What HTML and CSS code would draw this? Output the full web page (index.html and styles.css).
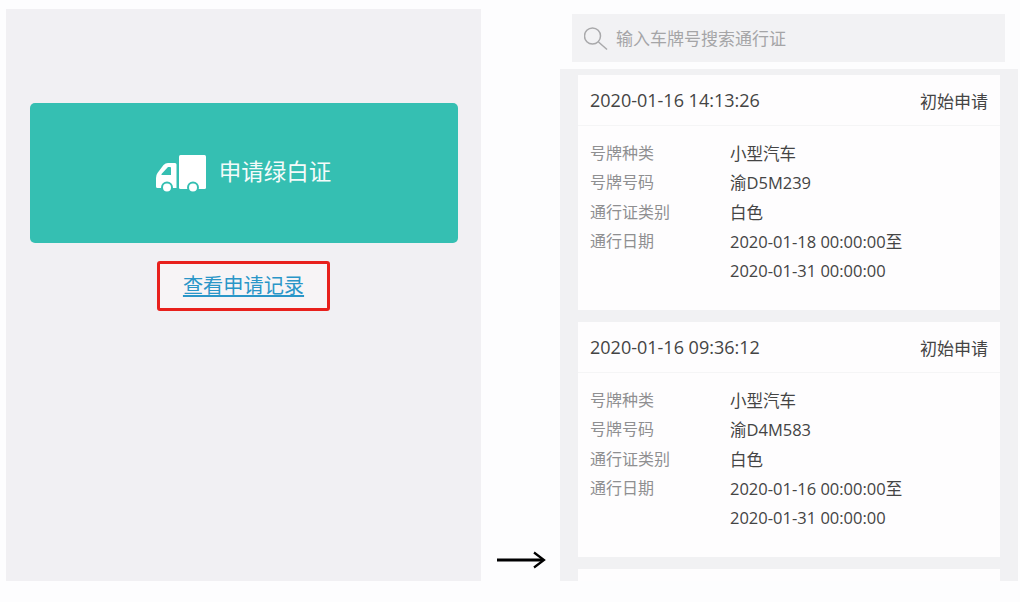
FILE: index.html
```html
<!DOCTYPE html>
<html lang="en">
<head>
    <meta charset="UTF-8">
    <meta name="viewport" content="width=device-width, initial-scale=1.0">
    <title>申请绿白证</title>
    <link rel="stylesheet" href="styles.css">
</head>
<body>
    <div class="page">
        <div class="apply-panel">
            <div class="apply-btn">
                <svg class="truck" width="50" height="38" viewBox="0 0 50 38">
                    <path fill="#fff" fill-rule="evenodd" d="M12 8h7q1.500 0 1.500 1.500v23.500h-19q-1.500 0-1.500-1.500v-8.500q0-3 1.500-5l6-8q2-2 4.500-2zM12 12h2q1 0 1 1v7h-9.500v-1z"/>
                    <path fill="#fff" d="M23 1.500q0-1.500 1.500-1.500h24q1.500 0 1.500 1.500v31q0 1.500-1.500 1.500h-24q-1.500 0-1.500-1.500z"/>
                    <circle cx="11" cy="32.500" r="5" fill="#fff" stroke="#35bfb2" stroke-width="2"/>
                    <circle cx="37" cy="32.500" r="5" fill="#fff" stroke="#35bfb2" stroke-width="2"/>
                </svg>
                <span class="apply-text">申请绿白证</span>
            </div>
            <div class="record-box"><a class="record-link" href="#">查看申请记录</a></div>
        </div>

        <div class="arrow-col">
            <svg width="50" height="18" viewBox="0 0 50 18">
                <path d="M1 9h46" stroke="#000" stroke-width="3" fill="none"/>
                <path d="M38 1.500l10 7.500-10 7.500" stroke="#000" stroke-width="2.200" fill="none"/>
            </svg>
        </div>

        <div class="records">
            <div class="search-bar">
                <svg width="24" height="26" viewBox="0 0 24 26">
                    <circle cx="8.500" cy="11" r="8" fill="none" stroke="#a9a9ab" stroke-width="1.500"/>
                    <path d="M14.500 17l8.500 7.500" stroke="#a9a9ab" stroke-width="1.500" fill="none"/>
                </svg>
                <span>输入车牌号搜索通行证</span>
            </div>
            <div class="record-list">
                <div class="card">
                    <div class="card-head">
                        <span class="card-time">2020-01-16 14:13:26</span>
                        <span class="card-status">初始申请</span>
                    </div>
                    <div class="card-body">
                        <div class="label">号牌种类</div><div class="value">小型汽车</div>
                        <div class="label">号牌号码</div><div class="value">渝D5M239</div>
                        <div class="label">通行证类别</div><div class="value">白色</div>
                        <div class="label">通行日期</div><div class="value">2020-01-18 00:00:00至<br>2020-01-31 00:00:00</div>
                    </div>
                </div>
                <div class="card">
                    <div class="card-head">
                        <span class="card-time">2020-01-16 09:36:12</span>
                        <span class="card-status">初始申请</span>
                    </div>
                    <div class="card-body">
                        <div class="label">号牌种类</div><div class="value">小型汽车</div>
                        <div class="label">号牌号码</div><div class="value">渝D4M583</div>
                        <div class="label">通行证类别</div><div class="value">白色</div>
                        <div class="label">通行日期</div><div class="value">2020-01-16 00:00:00至<br>2020-01-31 00:00:00</div>
                    </div>
                </div>
                <div class="card"></div>
            </div>
        </div>
    </div>
</body>
</html>
```

FILE: styles.css
```css
html, body {
    margin: 0;
    padding: 0;
    height: 100%;
    overflow: hidden;
}
body {
    background-color: #fdfdfe;
    font-family: "Open Sans", "Noto Sans CJK SC", sans-serif;
    font-size: 16px;
    color: #444;
}
.page {
    display: flex;
    height: 581px;
    padding-left: 6px;
}
.apply-panel {
    width: 475px;
    height: 572px;
    margin-top: 9px;
    padding: 94px 24px 0;
    box-sizing: border-box;
    background-color: #f1f0f3;
    display: flex;
    flex-direction: column;
    align-items: center;
}
.apply-btn {
    width: 428px;
    height: 140px;
    background-color: #35bfb2;
    border-radius: 5px;
    display: flex;
    align-items: center;
    justify-content: center;
    gap: 13px;
    color: #f4fbfa;
    font-size: 22.500px;
}
.truck {
    margin-top: 2px;
}
.apply-text {
    margin-top: -5px;
}
.record-box {
    width: 173px;
    height: 50px;
    margin-top: 18px;
    box-sizing: border-box;
    border: 3px solid #e8201c;
    border-radius: 3px;
    background-color: #f7f4f6;
    display: flex;
    align-items: center;
    justify-content: center;
}
.record-link {
    color: #2a96c8;
    font-size: 20.200px;
    line-height: 26px;
    margin-top: -3px;
}
.arrow-col {
    width: 79px;
    display: flex;
    align-items: flex-end;
    justify-content: center;
    padding-bottom: 12px;
    box-sizing: border-box;
}
.records {
    width: 458px;
    display: flex;
    flex-direction: column;
}
.search-bar {
    height: 48px;
    margin: 14px 13px 7px 12px;
    padding-left: 12px;
    background-color: #f2f2f4;
    display: flex;
    align-items: center;
    gap: 8px;
    color: #a5a5a7;
    font-size: 17px;
    flex-shrink: 0;
}
.search-bar span {
    margin-top: -2px;
}
.record-list {
    flex: 1;
    overflow: hidden;
    background-color: #f1f1f3;
    padding: 6px 18px 0;
    display: flex;
    flex-direction: column;
    gap: 12px;
}
.card {
    background-color: #fefdfe;
    height: 235px;
    flex-shrink: 0;
}
.card-head {
    height: 50px;
    padding: 0 12px;
    border-bottom: 1px solid #f5f5f6;
    display: flex;
    align-items: center;
    justify-content: space-between;
}
.card-time {
    font-size: 18px;
}
.card-status {
    font-size: 17px;
}
.card-body {
    display: grid;
    grid-template-columns: 140px 1fr;
    padding: 13px 12px 0;
    line-height: 29.300px;
}
.label {
    color: #8f8f91;
}
.value {
    color: #444;
    font-size: 16.500px;
}
```
